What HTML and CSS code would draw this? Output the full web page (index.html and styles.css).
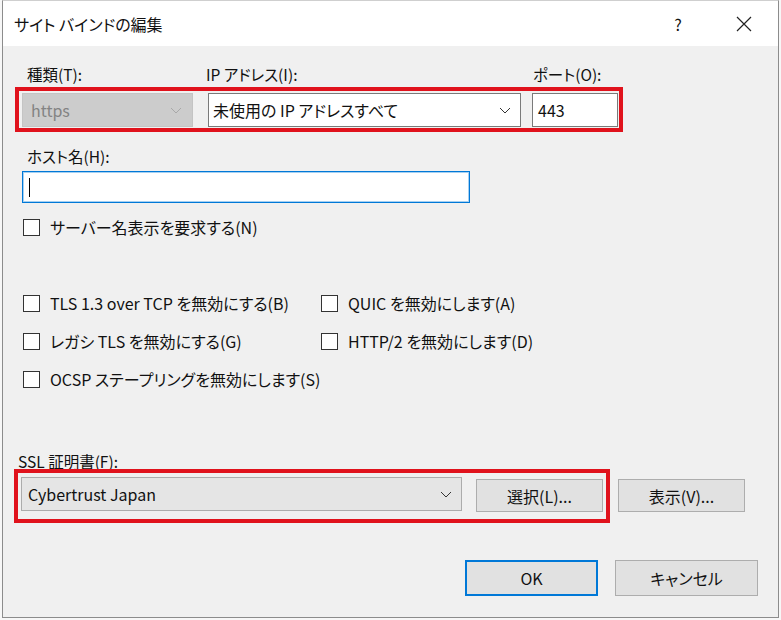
FILE: index.html
```html
<!DOCTYPE html>
<html lang="ja">
<head>
<meta charset="utf-8">
<title>サイト バインドの編集</title>
<link rel="stylesheet" href="styles.css">
</head>
<body>
<div class="window">
  <div class="titlebar">
    <span class="title">サイト バインドの編集</span>
    <span class="help">?</span>
    <span class="close"><svg width="16" height="16" viewBox="0 0 16 16"><path d="M1 1L15 15M15 1L1 15" stroke="#222" stroke-width="1.2" fill="none"/></svg></span>
  </div>
  <div class="content">
    <div class="labels-row">
      <span class="lbl lbl-type">種類(T):</span>
      <span class="lbl lbl-ip">IP アドレス(I):</span>
      <span class="lbl">ポート(O):</span>
    </div>
    <div class="redbox redbox-top">
      <div class="combo combo-disabled combo-type">
        <span>https</span>
        <svg class="chev" width="12" height="7" viewBox="0 0 12 7"><polyline points="1,1 6,6 11,1" fill="none" stroke="#a8a8a8" stroke-width="1"/></svg>
      </div>
      <div class="combo combo-white combo-ip">
        <span>未使用の IP アドレスすべて</span>
        <svg class="chev" width="12" height="7" viewBox="0 0 12 7"><polyline points="1,1 6,6 11,1" fill="none" stroke="#333" stroke-width="1"/></svg>
      </div>
      <div class="textbox port">443</div>
    </div>

    <div class="lbl lbl-host">ホスト名(H):</div>
    <div class="textbox host"><span class="caret"></span></div>

    <label class="check check-sni"><span class="box"></span><span>サーバー名表示を要求する(N)</span></label>

    <div class="check-grid">
      <label class="check"><span class="box"></span><span>TLS 1.3 over TCP を無効にする(B)</span></label>
      <label class="check"><span class="box"></span><span>QUIC を無効にします(A)</span></label>
      <label class="check"><span class="box"></span><span>レガシ TLS を無効にする(G)</span></label>
      <label class="check"><span class="box"></span><span>HTTP/2 を無効にします(D)</span></label>
      <label class="check"><span class="box"></span><span>OCSP ステープリングを無効にします(S)</span></label>
    </div>

    <div class="lbl lbl-ssl">SSL 証明書(F):</div>
    <div class="ssl-row">
      <div class="redbox redbox-ssl">
        <div class="combo combo-gray combo-cert">
          <span>Cybertrust Japan</span>
          <svg class="chev" width="12" height="7" viewBox="0 0 12 7"><polyline points="1,1 6,6 11,1" fill="none" stroke="#333" stroke-width="1"/></svg>
        </div>
        <button class="btn btn-select">選択(L)...</button>
      </div>
      <button class="btn btn-view">表示(V)...</button>
    </div>

    <div class="footer">
      <button class="btn btn-ok">OK</button>
      <button class="btn btn-cancel">キャンセル</button>
    </div>
  </div>
</div>
</body>
</html>
```
FILE: styles.css
```css
* { box-sizing: border-box; }
html, body { margin: 0; padding: 0; }
body {
  background: #f7f7f7;
  font-family: "Noto Sans CJK JP", "Noto Sans", sans-serif;
  font-feature-settings: "palt";
  font-size: 16px;
  color: #111;
  width: 781px;
  height: 620px;
  overflow: hidden;
}
.window {
  margin-left: 2px;
  width: 777px;
  height: 618px;
  border: 1px solid #8c8c8c;
  border-top-color: #cfcfcf;
  background: #f0f0f0;
  display: flex;
  flex-direction: column;
}
.titlebar {
  height: 45px;
  background: #fff;
  display: flex;
  align-items: center;
  padding-left: 11px;
  flex-shrink: 0;
}
.title { font-size: 16px; flex: 1; color: #111; }
.help { width: 20px; text-align: center; font-size: 16px; margin-right: 48px; }
.close { width: 16px; height: 16px; margin-right: 26px; display: flex; }
.content { display: flex; flex-direction: column; align-items: flex-start; }
.lbl { line-height: 20px; white-space: nowrap; font-size: 15.5px; }
.labels-row { display: flex; margin-top: 18px; padding-left: 24px; }
.lbl-type { width: 179px; }
.lbl-ip { width: 327px; }
.redbox { border: 4px solid #e0121c; display: flex; }
.redbox-top {
  margin-top: 3px;
  margin-left: 12px;
  width: 608px;
  height: 45px;
  padding: 2px 1px 0 3px;
}
.combo {
  height: 34px;
  display: flex;
  align-items: center;
  justify-content: space-between;
  padding: 0 10px 0 6px;
  border: 1px solid #7a7a7a;
  white-space: nowrap;
}
.combo-disabled { background: #cccccc; border-color: #c4c4c4; color: #838383; padding-left: 8px; }
.combo-type { width: 171px; }
.combo-white { background: #fff; }
.combo-ip { width: 313px; margin-left: 15px; padding-left: 4px; padding-right: 9px; }
.chev { flex-shrink: 0; }
.textbox { background: #fff; border: 1px solid #7a7a7a; display: flex; align-items: center; }
.port { width: 86px; height: 34px; margin-left: 11px; padding-left: 5px; }
.lbl-host { margin-top: 14px; margin-left: 24px; }
.host {
  margin-top: 5px;
  margin-left: 19px;
  width: 448px;
  height: 32px;
  border-color: #0078d7;
  box-shadow: inset 0 0 0 1px rgba(0, 120, 215, 0.35);
  padding-left: 6px;
}
.caret { width: 1px; height: 19px; background: #000; }
.check { display: flex; align-items: center; line-height: 20px; white-space: nowrap; }
.box {
  width: 17px;
  height: 17px;
  border: 1px solid #333;
  background: #fff;
  margin-right: 10px;
  flex-shrink: 0;
}
.check-sni { margin-top: 14px; margin-left: 20px; }
.check-grid {
  margin-top: 56px;
  margin-left: 20px;
  display: grid;
  grid-template-columns: 298px auto;
  row-gap: 18px;
}
.lbl-ssl { margin-top: 63px; margin-left: 15px; line-height: 18px; }
.ssl-row { display: flex; align-items: flex-start; margin-top: -1px; margin-left: 11px; }
.redbox-ssl {
  width: 596px;
  height: 54px;
  padding: 4px 3px 0 3px;
  align-items: flex-start;
}
.combo-gray { background: #e5e5e5; border-color: #acacac; }
.combo-cert { width: 441px; padding-left: 6px; padding-right: 9px; }
.btn {
  font-family: inherit;
  font-feature-settings: "palt";
  font-size: 16px;
  color: #111;
  background: #e1e1e1;
  border: 1px solid #adadad;
  padding: 0;
  margin: 0;
}
.btn-select { width: 127px; height: 33px; margin-left: 14px; margin-top: 2px; }
.btn-view { width: 127px; height: 33px; margin-left: 8px; margin-top: 10px; }
.footer {
  display: flex;
  align-self: stretch;
  justify-content: flex-end;
  gap: 17px;
  padding-right: 20px;
  margin-top: 37px;
}
.btn-ok { width: 133px; height: 36px; border: 2px solid #0078d7; }
.btn-cancel { width: 143px; height: 36px; }
```
